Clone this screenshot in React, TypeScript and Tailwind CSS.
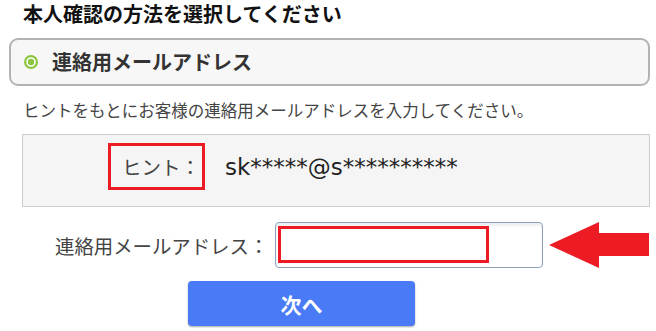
import React from "react";

export default function App() {
  return (
    <div
      className="relative w-[656px] h-[331px] overflow-hidden bg-white"
      style={{ fontFamily: '"Noto Sans CJK JP", "Noto Sans", sans-serif' }}
    >
      <h1 className="pl-[23px] h-[28px] text-[20px] leading-[28px] font-bold text-[#111]">
        本人確認の方法を選択してください
      </h1>

      <div className="ml-[9px] mt-[10px] w-[641px] h-[48px] rounded-[9px] border-2 border-[#b3b3b3] bg-[#f7f7f7] flex items-center pl-[13px] gap-[14px]">
        <svg width="14" height="14" viewBox="0 0 14 14" className="shrink-0">
          <circle cx="7" cy="7" r="5.9" fill="#fff" stroke="#8cc63f" strokeWidth="2.2" />
          <circle cx="7" cy="7" r="3.2" fill="#8cc63f" />
        </svg>
        <span className="text-[20px] leading-[28px] font-bold text-[#333]">連絡用メールアドレス</span>
      </div>

      <p className="pl-[23px] mt-[12px] text-[16.5px] leading-[24px] text-[#444] whitespace-nowrap">
        ヒントをもとにお客様の連絡用メールアドレスを入力してください。
      </p>

      <div className="ml-[22px] mt-[12px] w-[628px] h-[73px] border border-[#cccccc] bg-[#f5f5f5] flex items-start pt-[8px] pl-[85px]">
        <span className="w-[97px] h-[47px] border-[3px] border-[#ed1c24] flex items-center pl-[11px] text-[19.5px] text-[#444]">
          ヒント：
        </span>
        <span
          className="ml-[20px] mt-[9px] text-[23px] leading-[30px] text-[#222]"
          style={{ fontFamily: '"DejaVu Sans", sans-serif' }}
        >
          sk*****@s**********
        </span>
      </div>

      <div className="mt-[15px] pl-[55px] flex items-center">
        <span className="w-[213px] text-[19.4px] leading-[28px] text-[#444] whitespace-nowrap pt-[1px]">
          連絡用メールアドレス：
        </span>
        <div className="relative ml-[7px] w-[268px] h-[46px] rounded-[4px] border border-[#8aa3bd] bg-white shadow-[inset_0_3px_3px_rgba(0,0,0,0.07)]">
          <div className="absolute left-[2px] top-[3px] w-[211px] h-[37px] border-[3px] border-[#ed1c24]" />
        </div>
        <svg width="100" height="46" viewBox="0 0 100 46" className="ml-[6px]">
          <polygon points="0,23 50,0 50,11 100,11 100,34 50,34 50,46" fill="#ed1c24" />
        </svg>
      </div>

      <div className="ml-[188px] mt-[13px] w-[227px] h-[45px] rounded-[4px] bg-[#4a7bf6] shadow-[0_1px_2px_rgba(0,0,0,0.35)] flex items-center justify-center">
        <span className="text-white font-bold text-[21px] leading-[28px]">次へ</span>
      </div>
    </div>
  );
}
